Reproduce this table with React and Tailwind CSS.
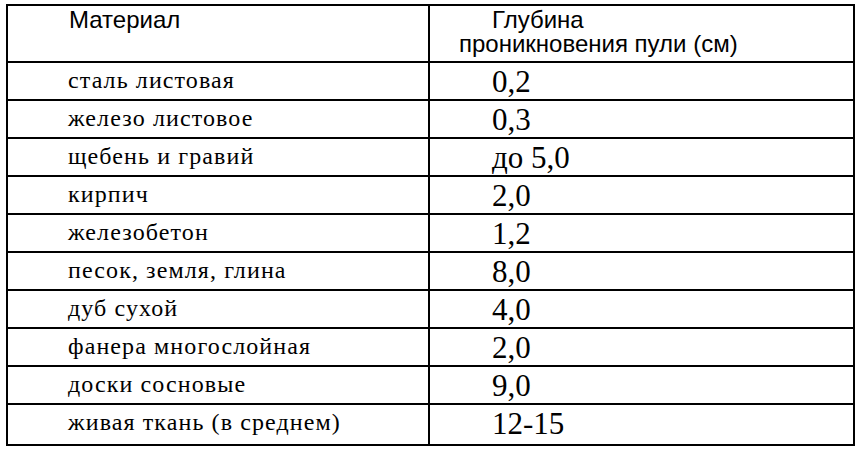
import React from "react";

const rows = [
  ["сталь листовая", "0,2"],
  ["железо листовое", "0,3"],
  ["щебень и гравий", "до 5,0"],
  ["кирпич", "2,0"],
  ["железобетон", "1,2"],
  ["песок, земля, глина", "8,0"],
  ["дуб сухой", "4,0"],
  ["фанера многослойная", "2,0"],
  ["доски сосновые", "9,0"],
  ["живая ткань (в среднем)", "12-15"],
];

const App = () => {
  return (
    <div className="w-[862px] h-[450px] bg-white pl-[6px] pt-[4px]">
      <div className="flex flex-col w-[849px] h-[442px] border-2 border-black text-black">
        {/* Header */}
        <div className="flex h-[57px] shrink-0 border-b-2 border-black font-['Liberation_Sans',Arial,sans-serif] text-[24px] leading-[24px]">
          <div className="w-[422px] border-r-2 border-black pl-[61px] pt-[2px]">
            Материал
          </div>
          <div className="flex-1 pt-[2px]">
            <div className="pl-[62px]">Глубина</div>
            <div className="pl-[29px]">проникновения пули (см)</div>
          </div>
        </div>

        {rows.map(([material, depth], i) => (
          <div
            key={material}
            className={`flex border-black ${i < rows.length - 1 ? "h-[38px] shrink-0 border-b-2" : "flex-1"}`}
          >
            <div className="w-[422px] border-r-2 border-black pl-[60px] pt-[5px] font-['Liberation_Serif','Times_New_Roman',serif] text-[24px] leading-[24px] tracking-[1.1px]">
              {material}
            </div>
            <div className="flex-1 pl-[62px] pt-[3px] font-['Liberation_Serif','Times_New_Roman',serif] text-[31px] leading-[31px]">
              {depth}
            </div>
          </div>
        ))}
      </div>
    </div>
  );
};

export default App;
